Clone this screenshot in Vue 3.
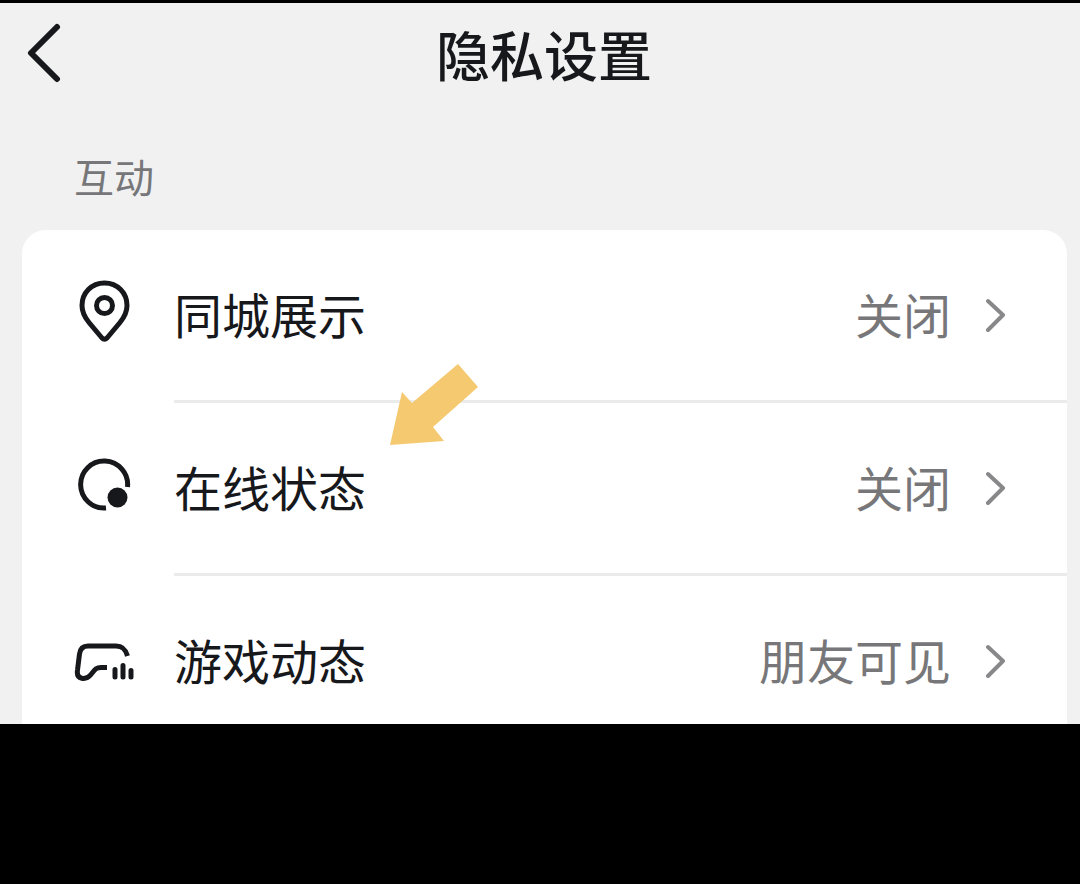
<script setup>
const rows = [
  { id: 'city', label: '同城展示', value: '关闭' },
  { id: 'online', label: '在线状态', value: '关闭' },
  { id: 'game', label: '游戏动态', value: '朋友可见' },
]
</script>

<template>
  <main class="screen">
    <header class="header">
      <button class="back" type="button" aria-label="返回">
        <svg width="36" height="60" viewBox="0 0 36 60" aria-hidden="true">
          <path d="M31 4 L5 30 L31 56" />
        </svg>
      </button>
      <h1 class="title">隐私设置</h1>
    </header>

    <section>
      <h2 class="group">互动</h2>
      <ul class="card">
        <li v-for="row in rows" :key="row.id">
          <button class="row" type="button">
            <svg v-if="row.id === 'city'" class="icon" viewBox="0 0 60 68" aria-hidden="true">
              <path d="M30.500 5 C17.500 5 8 15 8 27.500 C8 34 10.500 39 15 44.500 L28 60 Q30.500 62.500 33 60 L46 44.500 C50.500 39 53 34 53 27.500 C53 15 43.500 5 30.500 5 Z" />
              <circle cx="30.500" cy="27.500" r="8" />
            </svg>
            <svg v-else-if="row.id === 'online'" class="icon" viewBox="0 0 60 68" aria-hidden="true">
              <path d="M53.500 36 A23.500 23.500 0 1 0 32 57" />
              <circle class="solid" cx="43.500" cy="46.500" r="10" />
            </svg>
            <svg v-else class="icon" viewBox="0 0 60 68" aria-hidden="true">
              <path d="M53.500 32 C51.500 25 48.500 22 42 22 H14 Q6.500 22 5.500 30 L3.500 46 C2 56 12 56.500 17 50.500 C21 45.500 22 43.500 27 43.500 H33" />
              <path class="bars" d="M41 45.500 V53 M49 41.500 V53 M57 46.500 V53" />
            </svg>
            <span class="content">
              <span class="label">{{ row.label }}</span>
              <span class="value">{{ row.value }}</span>
              <svg class="chevron" width="24" height="38" viewBox="0 0 24 38" aria-hidden="true">
                <path d="M5 7 L20 21 L5 36" />
              </svg>
            </span>
          </button>
        </li>
      </ul>
    </section>

    <svg class="pointer" width="92" height="84" viewBox="0 0 92 84" aria-hidden="true">
      <path d="M71 1 L91 24 L46 64 L57 78 L3 82 L15 29 L25 40 Z" />
    </svg>
  </main>
</template>

<style>
body {
  background: #000;
}
</style>

<style scoped>
.screen {
  position: relative;
  border-top: 3px solid #000;
  background: #f1f1f2;
  color: #17181c;
  font-family: "Noto Sans CJK SC", sans-serif;
}

.header {
  display: grid;
  grid-template-columns: 88px 1fr 80px;
  align-items: center;
  height: 104px;
}

button {
  border: 0;
  background: none;
  color: inherit;
  font: inherit;
}

.back {
  display: flex;
  width: 88px;
  padding: 0 0 4px 26px;
}

.back path {
  fill: none;
  stroke: #17181c;
  stroke-width: 6;
  stroke-linecap: round;
  stroke-linejoin: round;
}

.title {
  margin: 0;
  padding-bottom: 2px;
  font-size: 54px;
  font-weight: 500;
  line-height: 80px;
  text-align: center;
}

.group {
  margin: 0;
  padding: 39px 74px 24px;
  color: #77777a;
  font-size: 40px;
  font-weight: 400;
  line-height: 60px;
}

.card {
  margin: 0 13px 0 22px;
  padding: 0;
  border-radius: 24px 24px 0 0;
  background: #fff;
  list-style: none;
}

.row {
  display: flex;
  width: 100%;
  padding: 0 0 0 52px;
  font-size: 48px;
  line-height: 72px;
  text-align: left;
}

.icon {
  flex: none;
  width: 60px;
  height: 68px;
  margin: 48px 40px 0 0;
  fill: none;
  stroke: #17181c;
  stroke-width: 5;
  stroke-linejoin: round;
}

.solid {
  fill: #17181c;
  stroke: none;
}

.bars {
  stroke-linecap: round;
}

.content {
  display: flex;
  flex: 1;
  align-items: center;
  padding: 47px 60px 51px 0;
  border-bottom: 3px solid #ebebeb;
}

li:last-child .content {
  padding-bottom: 29px;
  border-bottom: 0;
}

.label {
  flex: 1;
}

.value {
  margin-right: 32px;
  color: #77777a;
}

.chevron {
  flex: none;
}

.chevron path {
  fill: none;
  stroke: #88888a;
  stroke-width: 4;
  stroke-linecap: round;
  stroke-linejoin: round;
}

.pointer {
  position: absolute;
  top: 360px;
  left: 387px;
  fill: #f4c970;
}
</style>
